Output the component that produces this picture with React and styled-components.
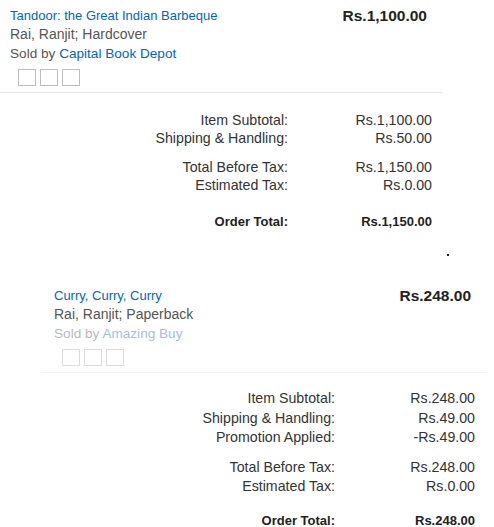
import React from "react";
import styled, { createGlobalStyle } from "styled-components";

const Global = createGlobalStyle`
  html, body { margin: 0; padding: 0; background: #fff; }
  body { font-family: "Liberation Sans", Arial, sans-serif; color: #333; }
`;

const Page = styled.div`
  width: 494px;
  height: 527px;
  overflow: hidden;
  display: flex;
  flex-direction: column;
`;

const Item = styled.section`
  margin-left: ${(p) => p.$shift}px;
  padding-top: ${(p) => p.$top}px;
  width: ${(p) => p.$width}px;
`;

const ItemRow = styled.div`
  display: flex;
  justify-content: space-between;
  align-items: flex-start;
  padding: 0 16px 0 10px;
`;

const Info = styled.div`
  display: flex;
  flex-direction: column;
  font-size: 14px;
  line-height: 19px;
`;

const Title = styled.a`
  font-size: 13px;
  color: #0066c0;
  text-decoration: none;
  cursor: pointer;
`;

const Link = styled.a`
  color: ${(p) => (p.$faded ? "#a3c0dc" : "#0066c0")};
  text-decoration: none;
  cursor: pointer;
`;

const Meta = styled.div`
  color: ${(p) => (p.$faded ? "#b9b9b9" : "#555")};
  font-size: ${(p) => (p.$small ? "13.6px" : "14px")};
`;

const Boxes = styled.div`
  display: flex;
  gap: 4px;
  margin: 6.5px 0 0 8px;
`;

const Box = styled.span`
  width: 16px;
  height: 15px;
  border: 1px solid ${(p) => (p.$faded ? "#dcdcdc" : "#bdbdbd")};
`;

const Price = styled.div`
  font-size: 15.5px;
  line-height: 19px;
  font-weight: bold;
  color: #222;
`;

const Divider = styled.hr`
  margin: 6px 0 0 ${(p) => p.$inset || 0}px;
  border: 0;
  height: 1px;
  background: ${(p) => (p.$faded ? "#f2f2f2" : "#e7e7e7")};
`;

const Summary = styled.div`
  display: grid;
  grid-template-columns: ${(p) => p.$label}px ${(p) => p.$value}px;
  margin-top: ${(p) => p.$top}px;
  font-size: 14.2px;
  line-height: ${(p) => p.$lh}px;
  color: #333;
`;

const Label = styled.div`
  text-align: right;
  margin-top: ${(p) => p.$gap || 0}px;
  font-weight: ${(p) => (p.$bold ? "bold" : "normal")};
  font-size: ${(p) => (p.$bold ? "13px" : "inherit")};
  color: ${(p) => (p.$bold ? "#222" : "inherit")};
`;

const Value = styled(Label)``;

const Dot = styled.span`
  display: block;
  flex: none;
  width: 2px;
  height: 2px;
  background: #222;
  margin: 23px 0 0 447px;
`;

function Rows({ rows }) {
  return rows.map((r) => (
    <React.Fragment key={r.label}>
      <Label $gap={r.gap} $bold={r.bold}>{r.label}</Label>
      <Value $gap={r.gap} $bold={r.bold}>{r.value}</Value>
    </React.Fragment>
  ));
}

function ItemBlock({ shift, top, width, inset, faded, title, meta, seller, price }) {
  return (
    <Item $shift={shift} $top={top} $width={width}>
      <ItemRow>
        <Info>
          <Title>{title}</Title>
          <Meta>{meta}</Meta>
          <Meta $faded={faded} $small>
            Sold by <Link $faded={faded}>{seller}</Link>
          </Meta>
          <Boxes>
            <Box $faded={faded} />
            <Box $faded={faded} />
            <Box $faded={faded} />
          </Boxes>
        </Info>
        <Price>{price}</Price>
      </ItemRow>
      <Divider $faded={faded} $inset={inset} />
    </Item>
  );
}

export default function App() {
  return (
    <Page>
      <Global />
      <ItemBlock
        shift={0}
        top={5.5}
        width={443}
        title="Tandoor: the Great Indian Barbeque"
        meta="Rai, Ranjit; Hardcover"
        seller="Capital Book Depot"
        price="Rs.1,100.00"
      />
      <Summary $label={288} $value={144} $top={18} $lh={18}>
        <Rows
          rows={[
            { label: "Item Subtotal:", value: "Rs.1,100.00" },
            { label: "Shipping & Handling:", value: "Rs.50.00" },
            { label: "Total Before Tax:", value: "Rs.1,150.00", gap: 11 },
            { label: "Estimated Tax:", value: "Rs.0.00" },
            { label: "Order Total:", value: "Rs.1,150.00", gap: 19, bold: true },
          ]}
        />
      </Summary>
      <Dot />
      <ItemBlock
        shift={44}
        top={29.5}
        width={443}
        inset={-2}
        faded
        title="Curry, Curry, Curry"
        meta="Rai, Ranjit; Paperback"
        seller="Amazing Buy"
        price="Rs.248.00"
      />
      <Summary $label={335} $value={140} $top={16} $lh={19.5}>
        <Rows
          rows={[
            { label: "Item Subtotal:", value: "Rs.248.00" },
            { label: "Shipping & Handling:", value: "Rs.49.00" },
            { label: "Promotion Applied:", value: "-Rs.49.00" },
            { label: "Total Before Tax:", value: "Rs.248.00", gap: 10 },
            { label: "Estimated Tax:", value: "Rs.0.00" },
            { label: "Order Total:", value: "Rs.248.00", gap: 14.5, bold: true },
          ]}
        />
      </Summary>
    </Page>
  );
}
